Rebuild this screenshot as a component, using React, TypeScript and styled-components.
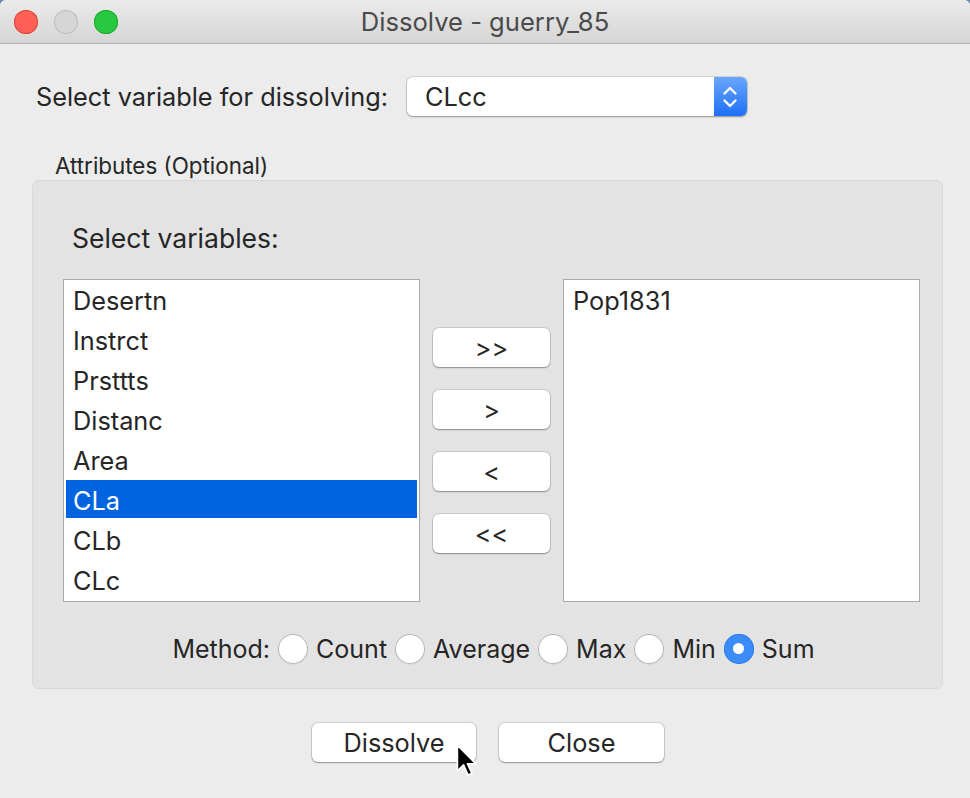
import React from "react";
import styled, { createGlobalStyle } from "styled-components";

const Global = createGlobalStyle`
  html, body { margin: 0; padding: 0; background: #6d8db4; }
  body { font-family: Inter, "Liberation Sans", sans-serif; color: #262626; }
  * { box-sizing: border-box; }
`;

const Window = styled.div`
  position: relative;
  width: 970px;
  height: 798px;
  background: #ececec;
  border-radius: 6px 6px 0 0;
  overflow: hidden;
  display: flex;
  flex-direction: column;
`;

const TitleBar = styled.div`
  flex: none;
  height: 44px;
  display: grid;
  grid-template-columns: 1fr auto 1fr;
  align-items: center;
  background: linear-gradient(#ebebeb, #d5d5d5);
  border-bottom: 1px solid #b4b4b4;
`;

const Lights = styled.div`
  display: flex;
  gap: 16px;
  padding-left: 14px;
`;

const Light = styled.span<{ $c: string; $b: string }>`
  width: 24px;
  height: 24px;
  border-radius: 50%;
  background: ${(p) => p.$c};
  box-shadow: inset 0 0 0 1px ${(p) => p.$b};
`;

const Title = styled.div`
  font-size: 25.6px;
  color: #4b4b4b;
`;

const VarRow = styled.div`
  margin-top: 33px;
  padding-left: 36px;
  display: flex;
  align-items: center;
  gap: 19px;
`;

const Label = styled.span<{ $size?: number }>`
  font-size: ${(p) => p.$size ?? 25.3}px;
  line-height: 30px;
  color: #262626;
`;

const Dropdown = styled.div`
  width: 340px;
  height: 39px;
  display: flex;
  background: #fff;
  border-radius: 6px;
  box-shadow: 0 0 0 1px rgba(0, 0, 0, 0.1), 0 1px 2px rgba(0, 0, 0, 0.3);
  overflow: hidden;
`;

const DropValue = styled.div`
  flex: 1;
  display: flex;
  align-items: center;
  padding-left: 18px;
  font-size: 25.3px;
  color: #262626;
`;

const Stepper = styled.div`
  width: 33px;
  display: flex;
  align-items: center;
  justify-content: center;
  background: linear-gradient(#6aa6fb, #1c70f7);
`;

const SmallLabel = styled.div`
  margin-top: 36px;
  padding-left: 55px;
  font-size: 22.4px;
  line-height: 28px;
  color: #262626;
`;

const Group = styled.div`
  margin-left: 32px;
  width: 911px;
  background: #e3e3e3;
  border: 1px solid #d9d9d9;
  border-radius: 7px;
  padding: 42px 22px 24px 30px;
  display: flex;
  flex-direction: column;
`;

const GroupLabel = styled(Label)`
  margin-left: 9px;
`;

const ListsRow = styled.div`
  margin-top: 26px;
  display: flex;
  align-items: center;
  gap: 13px;
`;

const ListBox = styled.div`
  width: 357px;
  height: 323px;
  background: #fff;
  border: 1px solid #a9a9a9;
  padding: 0 2px;
  display: flex;
  flex-direction: column;
  gap: 2px;
`;

const ListItem = styled.div<{ $selected?: boolean }>`
  height: 38px;
  flex: none;
  display: flex;
  align-items: center;
  padding: 3px 0 0 7px;
  font-size: 25.3px;
  color: ${(p) => (p.$selected ? "#fff" : "#262626")};
  background: ${(p) => (p.$selected ? "#0064e1" : "transparent")};
`;

const MoveColumn = styled.div`
  width: 117px;
  display: flex;
  flex-direction: column;
  gap: 23px;
`;

const PushButton = styled.button<{ $w?: number }>`
  width: ${(p) => (p.$w ? `${p.$w}px` : "100%")};
  height: 39px;
  border: none;
  border-radius: 6px;
  background: #fff;
  box-shadow: 0 0 0 1px rgba(0, 0, 0, 0.11), 0 1px 1.5px rgba(0, 0, 0, 0.3);
  font-family: Inter, "Liberation Sans", sans-serif;
  font-size: 25.3px;
  color: #262626;
  padding: 0;
  display: flex;
  align-items: center;
  justify-content: center;
`;

const MethodRow = styled.div`
  margin-top: 31px;
  height: 31px;
  display: flex;
  align-items: center;
  justify-content: center;
  gap: 8px;
  padding-left: 4px;
`;

const RadioItem = styled.label`
  display: flex;
  align-items: center;
  gap: 8px;
  font-size: 25px;
  color: #262626;
`;

const RadioCircle = styled.span<{ $on?: boolean }>`
  width: 30px;
  height: 30px;
  border-radius: 50%;
  display: flex;
  align-items: center;
  justify-content: center;
  background: ${(p) => (p.$on ? "#3b8cf6" : "#fff")};
  box-shadow: ${(p) =>
    p.$on
      ? "inset 0 0 0 1px #2f7ef0"
      : "inset 0 0 0 1px #b4b4b4, 0 0.5px 1px rgba(0,0,0,0.12)"};
  &::after {
    content: "";
    display: ${(p) => (p.$on ? "block" : "none")};
    width: 11px;
    height: 11px;
    border-radius: 50%;
    background: #fff;
  }
`;

const Footer = styled.div`
  margin-top: 34px;
  padding-left: 6px;
  display: flex;
  justify-content: center;
  gap: 23px;
`;

const Cursor = styled.svg`
  position: absolute;
  left: 455px;
  top: 743px;
`;

const leftItems = ["Desertn", "Instrct", "Prsttts", "Distanc", "Area", "CLa", "CLb", "CLc"];
const methods = ["Count", "Average", "Max", "Min", "Sum"];

export default function App() {
  return (
    <>
      <Global />
      <Window>
        <TitleBar>
          <Lights>
            <Light $c="#fe5f57" $b="#e2463f" />
            <Light $c="#d6d6d6" $b="#bdbdbd" />
            <Light $c="#28c840" $b="#1daa2c" />
          </Lights>
          <Title>Dissolve - guerry_85</Title>
          <span />
        </TitleBar>

        <VarRow>
          <Label>Select variable for dissolving:</Label>
          <Dropdown>
            <DropValue>CLcc</DropValue>
            <Stepper>
              <svg width="16" height="24" viewBox="0 0 16 24" fill="none" stroke="#fff" strokeWidth="2.4" strokeLinecap="round" strokeLinejoin="round">
                <path d="M2.5 8.5 L8 3 L13.5 8.5" />
                <path d="M2.5 15.5 L8 21 L13.5 15.5" />
              </svg>
            </Stepper>
          </Dropdown>
        </VarRow>

        <SmallLabel>Attributes (Optional)</SmallLabel>
        <Group>
          <GroupLabel $size={26.5}>Select variables:</GroupLabel>
          <ListsRow>
            <ListBox>
              {leftItems.map((it) => (
                <ListItem key={it} $selected={it === "CLa"}>
                  {it}
                </ListItem>
              ))}
            </ListBox>
            <MoveColumn>
              <PushButton>&gt;&gt;</PushButton>
              <PushButton>&gt;</PushButton>
              <PushButton>&lt;</PushButton>
              <PushButton>&lt;&lt;</PushButton>
            </MoveColumn>
            <ListBox>
              <ListItem>Pop1831</ListItem>
            </ListBox>
          </ListsRow>
          <MethodRow>
            <Label $size={25}>Method:</Label>
            {methods.map((m) => (
              <RadioItem key={m}>
                <RadioCircle $on={m === "Sum"} />
                {m}
              </RadioItem>
            ))}
          </MethodRow>
        </Group>

        <Footer>
          <PushButton $w={164}>Dissolve</PushButton>
          <PushButton $w={165}>Close</PushButton>
        </Footer>

        <Cursor width="25" height="36" viewBox="0 0 22 32">
          <path
            d="M2 2 L2 25 L7.5 19.5 L11.5 28.5 L15 27 L11 18.5 L18.5 18.5 Z"
            fill="#000"
            stroke="#fff"
            strokeWidth="1.5"
            strokeLinejoin="round"
          />
        </Cursor>
      </Window>
    </>
  );
}
